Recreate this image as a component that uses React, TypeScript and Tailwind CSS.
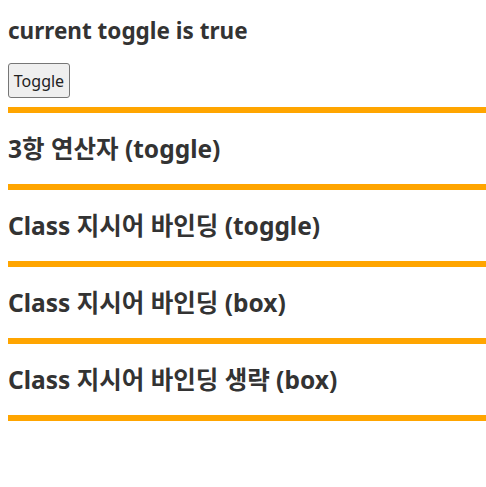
import React, { useState } from "react";

const font = "font-['Noto_Sans','Noto_Sans_CJK_KR',sans-serif]";

function Section({ title }: { title: string }) {
  return (
    <>
      <div className="h-[6px] bg-[#ffa500]" />
      <h2 className="my-[20px] text-[24.5px] leading-[31px] font-bold">{title}</h2>
    </>
  );
}

function App() {
  const [toggle, setToggle] = useState(true);

  return (
    <div className={`${font} min-h-[487px] bg-white pl-2 pt-[16px] text-[#333]`}>
      <h3 className="text-[22.5px] leading-[29px] font-bold">current toggle is {toggle ? "true" : "false"}</h3>
      <button
        onClick={() => setToggle(!toggle)}
        className="mt-[18px] mb-[9px] h-[35px] w-[62px] rounded-[3px] border border-[#767676] bg-[#efefef] text-[16px] text-[#222]"
      >
        Toggle
      </button>
      <Section title="3항 연산자 (toggle)" />
      <Section title="Class 지시어 바인딩 (toggle)" />
      <Section title="Class 지시어 바인딩 (box)" />
      <Section title="Class 지시어 바인딩 생략 (box)" />
      <div className="h-[6px] bg-[#ffa500]" />
    </div>
  );
}

export default App;
